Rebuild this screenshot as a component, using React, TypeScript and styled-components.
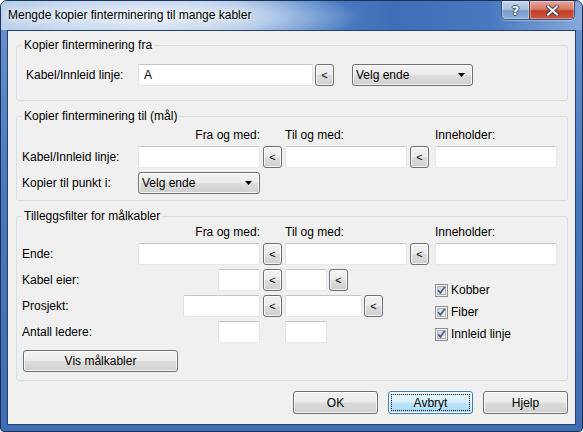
import React from 'react'
import styled, { createGlobalStyle } from 'styled-components'

const GlobalStyle = createGlobalStyle`
  html, body {
    margin: 0;
    padding: 0;
    background: #ffffff;
  }
  body {
    font-family: "Liberation Sans", Arial, sans-serif;
    font-size: 12px;
    color: #000;
  }
  * {
    box-sizing: border-box;
  }
`

const Window = styled.div`
  width: 583px;
  height: 432px;
  display: flex;
  flex-direction: column;
  border: 1px solid #1c3153;
  border-radius: 7px 7px 4px 4px;
  background: linear-gradient(180deg, #6a93cf 0%, #4777bd 45%, #3f6db4 100%);
  overflow: hidden;
`

const TitleBar = styled.div`
  height: 29px;
  flex: none;
  display: flex;
  align-items: flex-start;
  padding: 0 7px;
  background:
    radial-gradient(ellipse 210px 34px at 150px 16px, rgba(235, 242, 251, 0.95) 0%, rgba(214, 227, 244, 0.75) 55%, rgba(200, 218, 240, 0) 100%),
    linear-gradient(90deg, #a9c3e5 0%, #94b3de 32%, #5184c8 50%, #3e6eb7 68%, #4878c0 84%, #86a9da 100%);
`

const TitleText = styled.div`
  flex: 1;
  padding-top: 7px;
  line-height: 15px;
  font-size: 12px;
  color: #000;
  text-shadow: 0 0 6px #ffffff, 0 0 10px #ffffff;
  white-space: nowrap;
`

const CaptionButtons = styled.div`
  display: flex;
  height: 19px;
  border: 1px solid #37527c;
  border-top: none;
  border-radius: 0 0 5px 5px;
  overflow: hidden;
  box-shadow: 0 1px 0 rgba(255, 255, 255, 0.35);
`

const CaptionButton = styled.div<{ $close?: boolean }>`
  width: ${p => (p.$close ? '45px' : '27px')};
  height: 100%;
  display: flex;
  align-items: center;
  justify-content: center;
  border-left: ${p => (p.$close ? '1px solid #4b3a52' : 'none')};
  background: ${p =>
    p.$close
      ? 'linear-gradient(180deg, #e6a69a 0%, #d77b69 45%, #c23e25 55%, #d0573f 100%)'
      : 'linear-gradient(180deg, #c6d7ee 0%, #a5bfe3 45%, #7a9ccd 55%, #8eafdc 100%)'};
  box-shadow: inset 0 0 0 1px rgba(255, 255, 255, 0.35);
`

const HelpGlyph = styled.span`
  font-family: "DejaVu Sans", sans-serif;
  font-weight: bold;
  font-size: 13px;
  line-height: 13px;
  color: #fff;
  text-shadow: 1px 0 0 #3b4a66, -1px 0 0 #3b4a66, 0 1px 0 #3b4a66, 0 -1px 0 #3b4a66;
`

const Client = styled.div`
  flex: 1;
  margin: 0 6px 6px;
  border: 1px solid #22406a;
  background: #f0f0f0;
  padding: 6px 7px 0 8px;
  display: flex;
  flex-direction: column;
`

const Group = styled.fieldset<{ $top: number; $bottom: number }>`
  margin: 0;
  padding: ${p => p.$top}px 0 ${p => p.$bottom}px 0;
  min-width: 0;
  border: 1px solid #d5dfe5;
  border-radius: 3px;
  & + & {
    margin-top: 7px;
  }
`

const Legend = styled.legend`
  margin-left: 5px;
  padding: 0 2px;
  line-height: 16px;
  font-size: 12px;
  color: #000;
`

const FromRow = styled.div`
  display: flex;
  align-items: center;
  padding-left: 9px;
`

const Label = styled.div<{ $width?: number; $row?: number }>`
  ${p => (p.$width ? `width: ${p.$width}px;` : '')}
  ${p => (p.$row ? `grid-row: ${p.$row};` : '')}
  grid-column: 1;
  flex: none;
  white-space: nowrap;
  line-height: 15px;
`

const TextBox = styled.input<{ $width?: number }>`
  width: ${p => (p.$width ? `${p.$width}px` : '100%')};
  height: 22px;
  flex: none;
  margin: 0;
  padding: 0 5px;
  border: 1px solid;
  border-color: #c3c7cd #e2e3ea #e3e9ef #e2e3ea;
  border-radius: 2px;
  background: #fff;
  font-family: "Liberation Sans", Arial, sans-serif;
  font-size: 12px;
  color: #000;
  outline: none;
`

const buttonFace = `
  border: 1px solid #707070;
  border-radius: 3px;
  background: linear-gradient(180deg, #f2f2f2 0%, #ebebeb 48%, #dddddd 52%, #cfcfcf 100%);
  box-shadow: inset 0 0 0 1px rgba(255, 255, 255, 0.75);
  font-family: "Liberation Sans", Arial, sans-serif;
  font-size: 12px;
  color: #000;
`

const PickButton = styled.button`
  ${buttonFace}
  width: 19px;
  height: 22px;
  flex: none;
  margin: 0;
  padding: 0;
  font-size: 11px;
  line-height: 1;
`

const Combo = styled.div<{ $width: number }>`
  ${buttonFace}
  width: ${p => p.$width}px;
  height: 22px;
  flex: none;
  display: flex;
  align-items: center;
  justify-content: space-between;
  padding: 0 7px 0 3px;
`

const FieldGrid = styled.div<{ $rows: string; $top: number }>`
  display: grid;
  grid-template-columns: 113px 122px 19px 122px 19px 125px;
  grid-template-rows: ${p => p.$rows};
  column-gap: 3px;
  row-gap: 4px;
  margin: ${p => p.$top}px 0 0 5px;
  align-items: center;
`

const Header = styled.div<{ $col: number; $right?: boolean }>`
  grid-row: 1;
  grid-column: ${p => p.$col};
  justify-self: ${p => (p.$right ? 'end' : 'start')};
  margin-left: ${p => (p.$col === 6 ? '3px' : '0')};
  line-height: 14px;
  white-space: nowrap;
`

const Cell = styled.div<{ $col: number; $row: number; $end?: boolean }>`
  grid-row: ${p => p.$row};
  grid-column: ${p => p.$col};
  justify-self: ${p => (p.$end ? 'end' : 'stretch')};
  display: flex;
  align-items: center;
  gap: 2px;
  ${p => (p.$col === 6 ? 'padding-left: 3px;' : '')}
`

const CheckList = styled.div`
  grid-column: 6;
  grid-row: 3 / span 3;
  align-self: start;
  margin: 10px 0 0 3px;
  display: flex;
  flex-direction: column;
`

const CheckItem = styled.label`
  height: 22px;
  display: flex;
  align-items: center;
  gap: 3px;
  white-space: nowrap;
`

const WideButton = styled.button`
  ${buttonFace}
  width: 155px;
  height: 22px;
  margin: 7px 0 0 6px;
  padding: 0;
`

const ButtonBar = styled.div`
  display: flex;
  justify-content: flex-end;
  gap: 10px;
  margin-top: 10px;
`

const DialogButton = styled.button<{ $default?: boolean }>`
  ${buttonFace}
  width: 85px;
  height: 23px;
  margin: 0;
  padding: 0;
  ${p =>
    p.$default
      ? `
    border-color: #3c7fb1;
    background: linear-gradient(180deg, #eaf6fd 0%, #d9f0fc 48%, #bee6fd 52%, #a7d9f5 100%);
    outline: 1px dotted #000;
    outline-offset: -4px;
  `
      : ''}
`

const ComboArrow = () => (
  <svg width="7" height="4" viewBox="0 0 7 4">
    <path d="M0 0H7L3.5 4Z" fill="#000" />
  </svg>
)

const CloseGlyph = () => (
  <svg width="13" height="11" viewBox="0 0 13 11">
    <path d="M2 1.5L11 9.5M11 1.5L2 9.5" stroke="#3a3a4a" strokeWidth="4" strokeLinecap="square" />
    <path d="M2 1.5L11 9.5M11 1.5L2 9.5" stroke="#fff" strokeWidth="2" strokeLinecap="square" />
  </svg>
)

const CheckBox = () => (
  <svg width="13" height="13" viewBox="0 0 13 13">
    <defs>
      <linearGradient id="cbFill" x1="0" y1="0" x2="1" y2="1">
        <stop offset="0" stopColor="#cbcfd5" />
        <stop offset="1" stopColor="#f6f6f6" />
      </linearGradient>
    </defs>
    <rect x="0.5" y="0.5" width="12" height="12" fill="#f4f4f4" stroke="#8e8f8f" />
    <rect x="2.5" y="2.5" width="8" height="8" fill="url(#cbFill)" stroke="#b4b8be" />
    <path d="M3.2 6.2L5.4 9L9.8 2.8" fill="none" stroke="#4a5f8f" strokeWidth="1.8" />
  </svg>
)

function Check({ label }: { label: string }) {
  return (
    <CheckItem>
      <CheckBox />
      {label}
    </CheckItem>
  )
}

export default function App() {
  return (
    <>
      <GlobalStyle />
      <Window>
        <TitleBar>
          <TitleText>Mengde kopier finterminering til mange kabler</TitleText>
          <CaptionButtons>
            <CaptionButton>
              <HelpGlyph>?</HelpGlyph>
            </CaptionButton>
            <CaptionButton $close>
              <CloseGlyph />
            </CaptionButton>
          </CaptionButtons>
        </TitleBar>

        <Client>
          <Group $top={11} $bottom={14}>
            <Legend>Kopier finterminering fra</Legend>
            <FromRow>
              <Label $width={112}>Kabel/Innleid linje:</Label>
              <TextBox $width={175} defaultValue="A" />
              <PickButton style={{ marginLeft: 2 }}>&lt;</PickButton>
              <Combo $width={121} style={{ marginLeft: 18 }}>
                Velg ende
                <ComboArrow />
              </Combo>
            </FromRow>
          </Group>

          <Group $top={0} $bottom={6}>
            <Legend>Kopier finterminering til (mål)</Legend>
            <FieldGrid $rows="14px 22px 22px" $top={4}>
              <Header $col={2} $right>Fra og med:</Header>
              <Header $col={4}>Til og med:</Header>
              <Header $col={6}>Inneholder:</Header>

              <Label $row={2}>Kabel/Innleid linje:</Label>
              <Cell $row={2} $col={2}><TextBox /></Cell>
              <Cell $row={2} $col={3}><PickButton>&lt;</PickButton></Cell>
              <Cell $row={2} $col={4}><TextBox /></Cell>
              <Cell $row={2} $col={5}><PickButton>&lt;</PickButton></Cell>
              <Cell $row={2} $col={6}><TextBox /></Cell>

              <Label $row={3}>Kopier til punkt i:</Label>
              <Cell $row={3} $col={2}>
                <Combo $width={122}>
                  Velg ende
                  <ComboArrow />
                </Combo>
              </Cell>
            </FieldGrid>
          </Group>

          <Group $top={0} $bottom={8}>
            <Legend>Tilleggsfilter for målkabler</Legend>
            <FieldGrid $rows="14px 22px 22px 22px 22px" $top={1}>
              <Header $col={2} $right>Fra og med:</Header>
              <Header $col={4}>Til og med:</Header>
              <Header $col={6}>Inneholder:</Header>

              <Label $row={2}>Ende:</Label>
              <Cell $row={2} $col={2}><TextBox /></Cell>
              <Cell $row={2} $col={3}><PickButton>&lt;</PickButton></Cell>
              <Cell $row={2} $col={4}><TextBox /></Cell>
              <Cell $row={2} $col={5}><PickButton>&lt;</PickButton></Cell>
              <Cell $row={2} $col={6}><TextBox /></Cell>

              <Label $row={3}>Kabel eier:</Label>
              <Cell $row={3} $col={2} $end><TextBox $width={42} /></Cell>
              <Cell $row={3} $col={3}><PickButton>&lt;</PickButton></Cell>
              <Cell $row={3} $col={4}>
                <TextBox $width={42} />
                <PickButton>&lt;</PickButton>
              </Cell>

              <Label $row={4}>Prosjekt:</Label>
              <Cell $row={4} $col={2} $end><TextBox $width={77} /></Cell>
              <Cell $row={4} $col={3}><PickButton>&lt;</PickButton></Cell>
              <Cell $row={4} $col={4}>
                <TextBox $width={77} />
                <PickButton>&lt;</PickButton>
              </Cell>

              <Label $row={5}>Antall ledere:</Label>
              <Cell $row={5} $col={2} $end><TextBox $width={42} /></Cell>
              <Cell $row={5} $col={4}><TextBox $width={42} /></Cell>

              <CheckList>
                <Check label="Kobber" />
                <Check label="Fiber" />
                <Check label="Innleid linje" />
              </CheckList>
            </FieldGrid>
            <WideButton>Vis målkabler</WideButton>
          </Group>

          <ButtonBar>
            <DialogButton>OK</DialogButton>
            <DialogButton $default>Avbryt</DialogButton>
            <DialogButton>Hjelp</DialogButton>
          </ButtonBar>
        </Client>
      </Window>
    </>
  )
}
